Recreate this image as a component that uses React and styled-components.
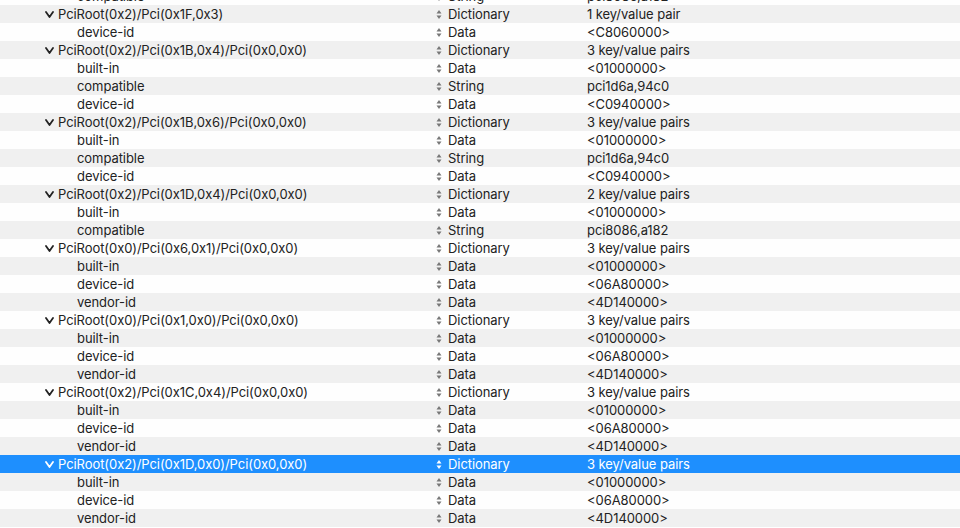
import styled, { createGlobalStyle } from 'styled-components'

const Global = createGlobalStyle`
    html, body {
        margin: 0;
        padding: 0;
        background: #ffffff;
        overflow: hidden;
    }
    body {
        font-family: Inter, "Liberation Sans", sans-serif;
        font-size: 13px;
        letter-spacing: -0.07px;
        color: #222222;
    }
`

const Table = styled.div`
    display: flex;
    flex-direction: column;
    margin-top: -13px;
    width: 960px;
`

const Row = styled.div`
    display: grid;
    grid-template-columns: 436px 151px 1fr;
    height: 18px;
    align-items: center;
    background: ${p => (p.$selected ? '#1e8ffe' : p.$striped ? '#f0f0f0' : '#fefefe')};
    color: ${p => (p.$selected ? '#ffffff' : '#222222')};
    white-space: nowrap;
`

const KeyCell = styled.div`
    display: flex;
    align-items: center;
    padding-left: ${p => (p.$child ? '77px' : '45px')};
`

const Chevron = styled.svg`
    width: 9px;
    height: 7px;
    margin-right: 4px;
    flex: none;
`

const TypeCell = styled.div`
    display: flex;
    align-items: center;
    gap: 6px;
`

const Stepper = styled.svg`
    width: 6px;
    height: 9px;
    flex: none;
`

const ValueCell = styled.div``

const rows = [
    ['compatible', 'String', 'pci8086,a182', true],
    ['PciRoot(0x2)/Pci(0x1F,0x3)', 'Dictionary', '1 key/value pair'],
    ['device-id', 'Data', '<C8060000>', true],
    ['PciRoot(0x2)/Pci(0x1B,0x4)/Pci(0x0,0x0)', 'Dictionary', '3 key/value pairs'],
    ['built-in', 'Data', '<01000000>', true],
    ['compatible', 'String', 'pci1d6a,94c0', true],
    ['device-id', 'Data', '<C0940000>', true],
    ['PciRoot(0x2)/Pci(0x1B,0x6)/Pci(0x0,0x0)', 'Dictionary', '3 key/value pairs'],
    ['built-in', 'Data', '<01000000>', true],
    ['compatible', 'String', 'pci1d6a,94c0', true],
    ['device-id', 'Data', '<C0940000>', true],
    ['PciRoot(0x2)/Pci(0x1D,0x4)/Pci(0x0,0x0)', 'Dictionary', '2 key/value pairs'],
    ['built-in', 'Data', '<01000000>', true],
    ['compatible', 'String', 'pci8086,a182', true],
    ['PciRoot(0x0)/Pci(0x6,0x1)/Pci(0x0,0x0)', 'Dictionary', '3 key/value pairs'],
    ['built-in', 'Data', '<01000000>', true],
    ['device-id', 'Data', '<06A80000>', true],
    ['vendor-id', 'Data', '<4D140000>', true],
    ['PciRoot(0x0)/Pci(0x1,0x0)/Pci(0x0,0x0)', 'Dictionary', '3 key/value pairs'],
    ['built-in', 'Data', '<01000000>', true],
    ['device-id', 'Data', '<06A80000>', true],
    ['vendor-id', 'Data', '<4D140000>', true],
    ['PciRoot(0x2)/Pci(0x1C,0x4)/Pci(0x0,0x0)', 'Dictionary', '3 key/value pairs'],
    ['built-in', 'Data', '<01000000>', true],
    ['device-id', 'Data', '<06A80000>', true],
    ['vendor-id', 'Data', '<4D140000>', true],
    ['PciRoot(0x2)/Pci(0x1D,0x0)/Pci(0x0,0x0)', 'Dictionary', '3 key/value pairs'],
    ['built-in', 'Data', '<01000000>', true],
    ['device-id', 'Data', '<06A80000>', true],
    ['vendor-id', 'Data', '<4D140000>', true],
]

const SELECTED = 26

function App() {
    return (
        <>
            <Global />
            <Table>
                {rows.map(([key, type, value, child], i) => {
                    const selected = i === SELECTED
                    const ink = selected ? '#ffffff' : '#222222'
                    return (
                        <Row key={i} $striped={i % 2 === 1} $selected={selected}>
                            <KeyCell $child={child}>
                                {!child && (
                                    <Chevron viewBox="0 0 9 7">
                                        <polyline points="1,1 4.5,6 8,1" fill="none" stroke={ink} strokeWidth="1.8" strokeLinecap="round" strokeLinejoin="round" />
                                    </Chevron>
                                )}
                                {key}
                            </KeyCell>
                            <TypeCell>
                                <Stepper viewBox="0 0 6 9">
                                    <polygon points="3,0 5.5,3.5 0.5,3.5" fill={selected ? '#ffffff' : '#777'} />
                                    <polygon points="3,9 5.5,5.5 0.5,5.5" fill={selected ? '#ffffff' : '#777'} />
                                </Stepper>
                                {type}
                            </TypeCell>
                            <ValueCell>{value}</ValueCell>
                        </Row>
                    )
                })}
            </Table>
        </>
    )
}

export default App
